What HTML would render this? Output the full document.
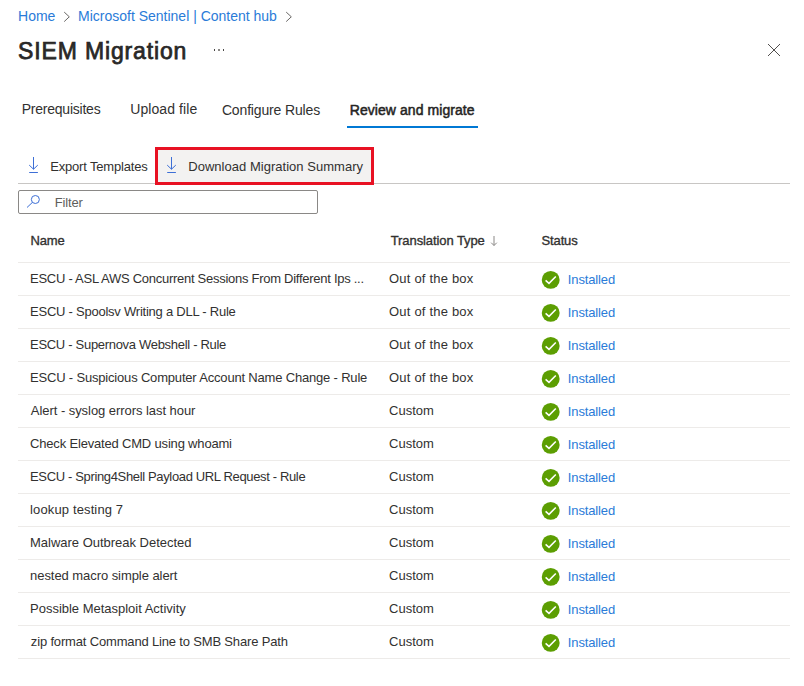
<!DOCTYPE html>
<html><head><meta charset="utf-8">
<style>
*{margin:0;padding:0;box-sizing:border-box}
html,body{width:804px;height:686px;background:#fff;overflow:hidden}
body{font-family:"Liberation Sans",sans-serif;color:#323130;position:relative}
.a{position:absolute;white-space:nowrap;line-height:1.117}
.ul{left:347px;top:126px;width:131px;height:2px;background:#0078d4}
.redbox{left:155px;top:147px;width:219px;height:38px;border:3px solid #e81123;background:#f3f2f1}
.hr{left:18px;top:183px;width:772px;height:1px;background:#c8c6c4}
.filter{left:18px;top:190px;width:300px;height:24px;border:1px solid #8a8886;border-radius:2px}
.rl{left:18px;width:772px;height:1px;background:#edebe9}
</style></head><body>
<svg class="a" style="left:63px;top:11px" width="8" height="11" viewBox="0 0 8 11"><path d="M1.2 1.1L6.3 5.8L1.2 10.6" stroke="#605e5c" stroke-width="0.95" fill="none"/></svg>
<svg class="a" style="left:285px;top:11px" width="8" height="11" viewBox="0 0 8 11"><path d="M1.2 1.1L6.3 5.8L1.2 10.6" stroke="#605e5c" stroke-width="0.95" fill="none"/></svg>
<div class="a" style="left:214px;top:49px;width:1px;height:2px;background:#484644"></div>
<div class="a" style="left:218px;top:49px;width:2px;height:2px;background:#8a8886"></div>
<div class="a" style="left:223px;top:49px;width:1px;height:2px;background:#484644"></div>
<svg class="a" style="left:766px;top:42px" width="16" height="16" viewBox="0 0 16 16"><path d="M2 2L14 14M14 2L2 14" stroke="#484644" stroke-width="0.95"/></svg>
<div class="a ul"></div>
<div class="a hr"></div>
<div class="a redbox"></div>
<svg class="a" style="left:27px;top:156px" width="13" height="18" viewBox="0 0 13 18"><path d="M6.5 1V13.2M2.2 9.1L6.5 13.2L10.8 9.1M2.2 16.5H10.9" stroke="#3d6fd6" stroke-width="1" fill="none"/></svg>
<svg class="a" style="left:165px;top:156px" width="13" height="18" viewBox="0 0 13 18"><path d="M6.5 1V13.2M2.2 9.1L6.5 13.2L10.8 9.1M2.2 16.5H10.9" stroke="#3d6fd6" stroke-width="1" fill="none"/></svg>
<div class="a filter"></div>
<svg class="a" style="left:25px;top:193px" width="16" height="16" viewBox="0 0 16 16"><circle cx="10.35" cy="6.5" r="4.0" stroke="#3d6fd6" stroke-width="1" fill="none"/><path d="M7.5 9.3L2 14.5" stroke="#3d6fd6" stroke-width="1"/></svg>
<svg class="a" style="left:489px;top:235px" width="10" height="12" viewBox="0 0 10 12"><path d="M5 1V10.5M2.2 7.7L5 10.5L7.8 7.7" stroke="#8a8886" stroke-width="1" fill="none"/></svg>
<div class="a rl" style="top:262px"></div>
<div class="a rl" style="top:295px"></div>
<div class="a rl" style="top:328px"></div>
<div class="a rl" style="top:361px"></div>
<div class="a rl" style="top:394px"></div>
<div class="a rl" style="top:427px"></div>
<div class="a rl" style="top:460px"></div>
<div class="a rl" style="top:493px"></div>
<div class="a rl" style="top:526px"></div>
<div class="a rl" style="top:559px"></div>
<div class="a rl" style="top:592px"></div>
<div class="a rl" style="top:625px"></div>
<div class="a rl" style="top:658px"></div>
<svg class="a" style="left:541px;top:270px" width="19" height="19" viewBox="0 0 19 19"><circle cx="9.7" cy="9.9" r="8.95" fill="#5c9e02"/><path d="M4.6 10.3L8 13.3L14.8 6.5" stroke="#fff" stroke-width="1.6" fill="none"/></svg>
<svg class="a" style="left:541px;top:303px" width="19" height="19" viewBox="0 0 19 19"><circle cx="9.7" cy="9.9" r="8.95" fill="#5c9e02"/><path d="M4.6 10.3L8 13.3L14.8 6.5" stroke="#fff" stroke-width="1.6" fill="none"/></svg>
<svg class="a" style="left:541px;top:336px" width="19" height="19" viewBox="0 0 19 19"><circle cx="9.7" cy="9.9" r="8.95" fill="#5c9e02"/><path d="M4.6 10.3L8 13.3L14.8 6.5" stroke="#fff" stroke-width="1.6" fill="none"/></svg>
<svg class="a" style="left:541px;top:369px" width="19" height="19" viewBox="0 0 19 19"><circle cx="9.7" cy="9.9" r="8.95" fill="#5c9e02"/><path d="M4.6 10.3L8 13.3L14.8 6.5" stroke="#fff" stroke-width="1.6" fill="none"/></svg>
<svg class="a" style="left:541px;top:402px" width="19" height="19" viewBox="0 0 19 19"><circle cx="9.7" cy="9.9" r="8.95" fill="#5c9e02"/><path d="M4.6 10.3L8 13.3L14.8 6.5" stroke="#fff" stroke-width="1.6" fill="none"/></svg>
<svg class="a" style="left:541px;top:435px" width="19" height="19" viewBox="0 0 19 19"><circle cx="9.7" cy="9.9" r="8.95" fill="#5c9e02"/><path d="M4.6 10.3L8 13.3L14.8 6.5" stroke="#fff" stroke-width="1.6" fill="none"/></svg>
<svg class="a" style="left:541px;top:468px" width="19" height="19" viewBox="0 0 19 19"><circle cx="9.7" cy="9.9" r="8.95" fill="#5c9e02"/><path d="M4.6 10.3L8 13.3L14.8 6.5" stroke="#fff" stroke-width="1.6" fill="none"/></svg>
<svg class="a" style="left:541px;top:501px" width="19" height="19" viewBox="0 0 19 19"><circle cx="9.7" cy="9.9" r="8.95" fill="#5c9e02"/><path d="M4.6 10.3L8 13.3L14.8 6.5" stroke="#fff" stroke-width="1.6" fill="none"/></svg>
<svg class="a" style="left:541px;top:534px" width="19" height="19" viewBox="0 0 19 19"><circle cx="9.7" cy="9.9" r="8.95" fill="#5c9e02"/><path d="M4.6 10.3L8 13.3L14.8 6.5" stroke="#fff" stroke-width="1.6" fill="none"/></svg>
<svg class="a" style="left:541px;top:567px" width="19" height="19" viewBox="0 0 19 19"><circle cx="9.7" cy="9.9" r="8.95" fill="#5c9e02"/><path d="M4.6 10.3L8 13.3L14.8 6.5" stroke="#fff" stroke-width="1.6" fill="none"/></svg>
<svg class="a" style="left:541px;top:600px" width="19" height="19" viewBox="0 0 19 19"><circle cx="9.7" cy="9.9" r="8.95" fill="#5c9e02"/><path d="M4.6 10.3L8 13.3L14.8 6.5" stroke="#fff" stroke-width="1.6" fill="none"/></svg>
<svg class="a" style="left:541px;top:633px" width="19" height="19" viewBox="0 0 19 19"><circle cx="9.7" cy="9.9" r="8.95" fill="#5c9e02"/><path d="M4.6 10.3L8 13.3L14.8 6.5" stroke="#fff" stroke-width="1.6" fill="none"/></svg>

<div id="bc1" class="a" style="left:18.06px;top:8.87px;font-size:14px;font-weight:normal;color:#2a7bd8;letter-spacing:0.000px">Home</div>
<div id="bc2" class="a" style="left:78.06px;top:9.19px;font-size:14px;font-weight:normal;color:#2a7bd8;letter-spacing:-0.004px">Microsoft Sentinel | Content hub</div>
<div id="title" class="a" style="left:18.06px;top:38.59px;font-size:23px;font-weight:normal;color:#292827;letter-spacing:0.858px;-webkit-text-stroke:0.75px #292827">SIEM Migration</div>
<div id="t1" class="a" style="left:21.70px;top:101.93px;font-size:14px;font-weight:normal;color:#323130;letter-spacing:-0.226px">Prerequisites</div>
<div id="t2" class="a" style="left:130.20px;top:101.93px;font-size:14px;font-weight:normal;color:#323130;letter-spacing:0.090px">Upload file</div>
<div id="t3" class="a" style="left:221.92px;top:102.93px;font-size:14px;font-weight:normal;color:#323130;letter-spacing:-0.154px">Configure Rules</div>
<div id="t4" class="a" style="left:349.74px;top:102.89px;font-size:14px;font-weight:normal;color:#252423;letter-spacing:0.064px;-webkit-text-stroke:0.50px #252423">Review and migrate</div>
<div id="tb1" class="a" style="left:50.20px;top:159.57px;font-size:13px;font-weight:normal;color:#323130;letter-spacing:-0.180px">Export Templates</div>
<div id="tb2" class="a" style="left:188.28px;top:159.77px;font-size:13px;font-weight:normal;color:#323130;letter-spacing:0.024px">Download Migration Summary</div>
<div id="flt" class="a" style="left:54.84px;top:195.84px;font-size:13px;font-weight:normal;color:#605e5c;letter-spacing:-0.180px">Filter</div>
<div id="h1" class="a" style="left:30.42px;top:233.73px;font-size:13px;font-weight:normal;color:#323130;letter-spacing:-0.120px;-webkit-text-stroke:0.35px #323130">Name</div>
<div id="h2" class="a" style="left:390.72px;top:233.73px;font-size:13px;font-weight:normal;color:#323130;letter-spacing:-0.084px;-webkit-text-stroke:0.35px #323130">Translation Type</div>
<div id="h3" class="a" style="left:541.56px;top:233.94px;font-size:13px;font-weight:normal;color:#323130;letter-spacing:-0.144px;-webkit-text-stroke:0.35px #323130">Status</div>
<div id="n0" class="a" style="left:30.06px;top:271.66px;font-size:13px;font-weight:normal;color:#323130;letter-spacing:-0.271px">ESCU - ASL AWS Concurrent Sessions From Different Ips ...</div>
<div id="c0" class="a" style="left:389.06px;top:272.00px;font-size:13px;font-weight:normal;color:#323130;letter-spacing:0.195px">Out of the box</div>
<div id="s0" class="a" style="left:567.84px;top:272.89px;font-size:13px;font-weight:normal;color:#2a7bd8;letter-spacing:-0.134px">Installed</div>
<div id="n1" class="a" style="left:30.06px;top:304.66px;font-size:13px;font-weight:normal;color:#323130;letter-spacing:-0.239px">ESCU - Spoolsv Writing a DLL - Rule</div>
<div id="c1" class="a" style="left:389.06px;top:305.00px;font-size:13px;font-weight:normal;color:#323130;letter-spacing:0.195px">Out of the box</div>
<div id="s1" class="a" style="left:567.84px;top:305.89px;font-size:13px;font-weight:normal;color:#2a7bd8;letter-spacing:-0.134px">Installed</div>
<div id="n2" class="a" style="left:30.06px;top:337.66px;font-size:13px;font-weight:normal;color:#323130;letter-spacing:-0.304px">ESCU - Supernova Webshell - Rule</div>
<div id="c2" class="a" style="left:389.06px;top:338.00px;font-size:13px;font-weight:normal;color:#323130;letter-spacing:0.195px">Out of the box</div>
<div id="s2" class="a" style="left:567.84px;top:338.89px;font-size:13px;font-weight:normal;color:#2a7bd8;letter-spacing:-0.134px">Installed</div>
<div id="n3" class="a" style="left:30.06px;top:370.66px;font-size:13px;font-weight:normal;color:#323130;letter-spacing:-0.183px">ESCU - Suspicious Computer Account Name Change - Rule</div>
<div id="c3" class="a" style="left:389.06px;top:371.00px;font-size:13px;font-weight:normal;color:#323130;letter-spacing:0.195px">Out of the box</div>
<div id="s3" class="a" style="left:567.84px;top:371.89px;font-size:13px;font-weight:normal;color:#2a7bd8;letter-spacing:-0.134px">Installed</div>
<div id="n4" class="a" style="left:30.86px;top:403.66px;font-size:13px;font-weight:normal;color:#323130;letter-spacing:-0.054px">Alert - syslog errors last hour</div>
<div id="c4" class="a" style="left:389.06px;top:404.00px;font-size:13px;font-weight:normal;color:#323130;letter-spacing:0.000px">Custom</div>
<div id="s4" class="a" style="left:567.84px;top:404.89px;font-size:13px;font-weight:normal;color:#2a7bd8;letter-spacing:-0.134px">Installed</div>
<div id="n5" class="a" style="left:30.06px;top:436.66px;font-size:13px;font-weight:normal;color:#323130;letter-spacing:-0.180px">Check Elevated CMD using whoami</div>
<div id="c5" class="a" style="left:389.06px;top:437.00px;font-size:13px;font-weight:normal;color:#323130;letter-spacing:0.000px">Custom</div>
<div id="s5" class="a" style="left:567.84px;top:437.89px;font-size:13px;font-weight:normal;color:#2a7bd8;letter-spacing:-0.134px">Installed</div>
<div id="n6" class="a" style="left:30.06px;top:469.66px;font-size:13px;font-weight:normal;color:#323130;letter-spacing:-0.352px">ESCU - Spring4Shell Payload URL Request - Rule</div>
<div id="c6" class="a" style="left:389.06px;top:470.00px;font-size:13px;font-weight:normal;color:#323130;letter-spacing:0.000px">Custom</div>
<div id="s6" class="a" style="left:567.84px;top:470.89px;font-size:13px;font-weight:normal;color:#2a7bd8;letter-spacing:-0.134px">Installed</div>
<div id="n7" class="a" style="left:30.06px;top:502.66px;font-size:13px;font-weight:normal;color:#323130;letter-spacing:0.132px">lookup testing 7</div>
<div id="c7" class="a" style="left:389.06px;top:502.99px;font-size:13px;font-weight:normal;color:#323130;letter-spacing:0.000px">Custom</div>
<div id="s7" class="a" style="left:567.84px;top:503.90px;font-size:13px;font-weight:normal;color:#2a7bd8;letter-spacing:-0.134px">Installed</div>
<div id="n8" class="a" style="left:30.06px;top:535.66px;font-size:13px;font-weight:normal;color:#323130;letter-spacing:-0.015px">Malware Outbreak Detected</div>
<div id="c8" class="a" style="left:389.06px;top:536.00px;font-size:13px;font-weight:normal;color:#323130;letter-spacing:0.000px">Custom</div>
<div id="s8" class="a" style="left:567.84px;top:536.90px;font-size:13px;font-weight:normal;color:#2a7bd8;letter-spacing:-0.134px">Installed</div>
<div id="n9" class="a" style="left:30.06px;top:568.66px;font-size:13px;font-weight:normal;color:#323130;letter-spacing:-0.060px">nested macro simple alert</div>
<div id="c9" class="a" style="left:389.06px;top:569.00px;font-size:13px;font-weight:normal;color:#323130;letter-spacing:0.000px">Custom</div>
<div id="s9" class="a" style="left:567.84px;top:569.90px;font-size:13px;font-weight:normal;color:#2a7bd8;letter-spacing:-0.134px">Installed</div>
<div id="n10" class="a" style="left:30.06px;top:601.66px;font-size:13px;font-weight:normal;color:#323130;letter-spacing:-0.014px">Possible Metasploit Activity</div>
<div id="c10" class="a" style="left:389.06px;top:602.00px;font-size:13px;font-weight:normal;color:#323130;letter-spacing:0.000px">Custom</div>
<div id="s10" class="a" style="left:567.84px;top:602.90px;font-size:13px;font-weight:normal;color:#2a7bd8;letter-spacing:-0.134px">Installed</div>
<div id="n11" class="a" style="left:30.86px;top:634.66px;font-size:13px;font-weight:normal;color:#323130;letter-spacing:-0.167px">zip format Command Line to SMB Share Path</div>
<div id="c11" class="a" style="left:389.06px;top:635.00px;font-size:13px;font-weight:normal;color:#323130;letter-spacing:0.000px">Custom</div>
<div id="s11" class="a" style="left:567.84px;top:635.90px;font-size:13px;font-weight:normal;color:#2a7bd8;letter-spacing:-0.134px">Installed</div>

</body></html>
